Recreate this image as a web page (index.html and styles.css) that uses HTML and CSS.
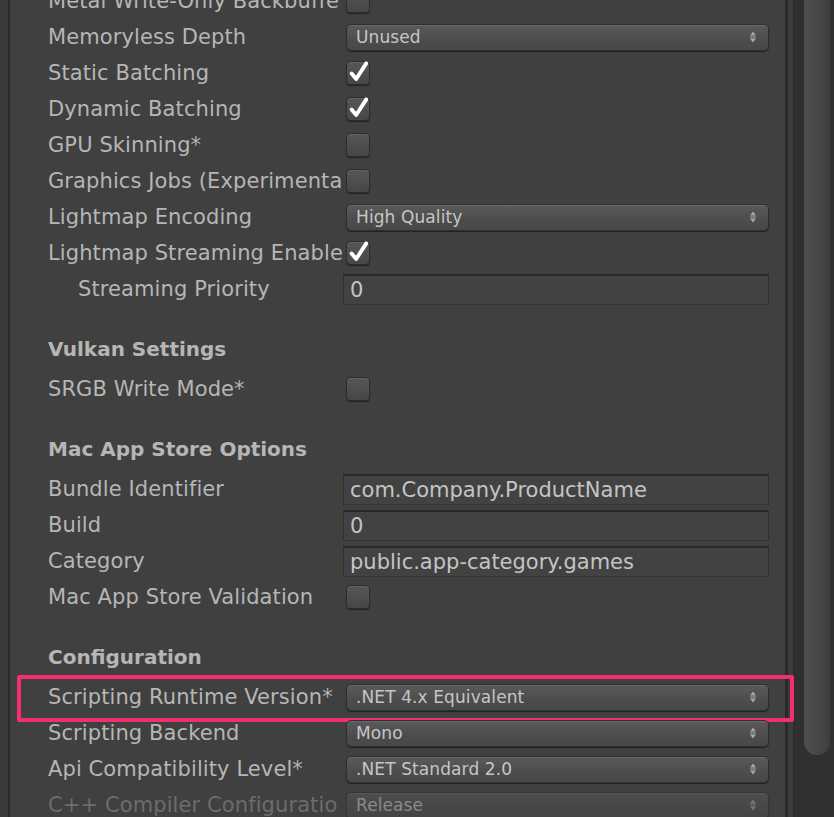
FILE: index.html
```html
<!DOCTYPE html>
<html>
<head>
<meta charset="utf-8">
<link rel="stylesheet" href="styles.css">
</head>
<body>
<div class="window">
  <div class="left-strip"></div>
  <div class="panel">
    <div class="content">
      <div class="row"><div class="label">Metal Write-Only Backbuffe</div><div class="value"><span class="check"></span></div></div>
      <div class="row"><div class="label">Memoryless Depth</div><div class="value"><div class="dropdown"><span>Unused</span><svg class="arrows" viewBox="0 0 8 14"><path d="M1 5.5 L4 1.5 L7 5.5Z M1 8.5 L4 12.5 L7 8.5Z"/><rect x="1" y="6.5" width="6" height="1"/></svg></div></div></div>
      <div class="row"><div class="label">Static Batching</div><div class="value"><span class="check on"><svg viewBox="0 0 24 24"><path d="M5 12.5 L10 18.5 L21 1.5"/></svg></span></div></div>
      <div class="row"><div class="label">Dynamic Batching</div><div class="value"><span class="check on"><svg viewBox="0 0 24 24"><path d="M5 12.5 L10 18.5 L21 1.5"/></svg></span></div></div>
      <div class="row"><div class="label">GPU Skinning*</div><div class="value"><span class="check"></span></div></div>
      <div class="row"><div class="label">Graphics Jobs (Experimenta</div><div class="value"><span class="check"></span></div></div>
      <div class="row"><div class="label">Lightmap Encoding</div><div class="value"><div class="dropdown"><span>High Quality</span><svg class="arrows" viewBox="0 0 8 14"><path d="M1 5.5 L4 1.5 L7 5.5Z M1 8.5 L4 12.5 L7 8.5Z"/><rect x="1" y="6.5" width="6" height="1"/></svg></div></div></div>
      <div class="row"><div class="label">Lightmap Streaming Enable</div><div class="value"><span class="check on"><svg viewBox="0 0 24 24"><path d="M5 12.5 L10 18.5 L21 1.5"/></svg></span></div></div>
      <div class="row"><div class="label indent">Streaming Priority</div><div class="value"><div class="field">0</div></div></div>

      <section class="section">
        <div class="header">Vulkan Settings</div>
        <div class="row"><div class="label">SRGB Write Mode*</div><div class="value"><span class="check"></span></div></div>
      </section>

      <section class="section">
        <div class="header">Mac App Store Options</div>
        <div class="row"><div class="label">Bundle Identifier</div><div class="value"><div class="field">com.Company.ProductName</div></div></div>
        <div class="row"><div class="label">Build</div><div class="value"><div class="field">0</div></div></div>
        <div class="row"><div class="label">Category</div><div class="value"><div class="field">public.app-category.games</div></div></div>
        <div class="row"><div class="label">Mac App Store Validation</div><div class="value"><span class="check"></span></div></div>
      </section>

      <section class="section">
        <div class="header">Configuration</div>
        <div class="row highlighted"><div class="label">Scripting Runtime Version*</div><div class="value"><div class="dropdown"><span>.NET 4.x Equivalent</span><svg class="arrows" viewBox="0 0 8 14"><path d="M1 5.5 L4 1.5 L7 5.5Z M1 8.5 L4 12.5 L7 8.5Z"/><rect x="1" y="6.5" width="6" height="1"/></svg></div></div><div class="annotation"></div></div>
        <div class="row"><div class="label">Scripting Backend</div><div class="value"><div class="dropdown"><span>Mono</span><svg class="arrows" viewBox="0 0 8 14"><path d="M1 5.5 L4 1.5 L7 5.5Z M1 8.5 L4 12.5 L7 8.5Z"/><rect x="1" y="6.5" width="6" height="1"/></svg></div></div></div>
        <div class="row"><div class="label">Api Compatibility Level*</div><div class="value"><div class="dropdown"><span>.NET Standard 2.0</span><svg class="arrows" viewBox="0 0 8 14"><path d="M1 5.5 L4 1.5 L7 5.5Z M1 8.5 L4 12.5 L7 8.5Z"/><rect x="1" y="6.5" width="6" height="1"/></svg></div></div></div>
        <div class="row disabled"><div class="label">C++ Compiler Configuratio</div><div class="value"><div class="dropdown"><span>Release</span><svg class="arrows" viewBox="0 0 8 14"><path d="M1 5.5 L4 1.5 L7 5.5Z M1 8.5 L4 12.5 L7 8.5Z"/><rect x="1" y="6.5" width="6" height="1"/></svg></div></div></div>
      </section>
    </div>
  </div>
  <div class="gutter">
    <div class="g-line"></div>
    <div class="g-mid"></div>
    <div class="g-line2"></div>
    <div class="scrollbar"><div class="thumb"></div></div>
  </div>
</div>
</body>
</html>
```

FILE: styles.css
```css
html, body {
  margin: 0;
  padding: 0;
  height: 817px;
  overflow: hidden;
  background: #404040;
  font-family: "DejaVu Sans", "Noto Sans", sans-serif;
}

.window {
  display: flex;
  height: 817px;
  width: 834px;
}

.left-strip {
  width: 8px;
  flex: none;
  background: #3a3a3a;
  border-right: 2px solid #2b2b2b;
}

.panel {
  width: 775px;
  flex: none;
  background: #404040;
  position: relative;
  z-index: 1;
}

.content {
  margin-top: -17px;
}

.row {
  display: flex;
  align-items: center;
  height: 36px;
  padding-left: 38px;
  position: relative;
}

.label {
  width: 295px;
  flex: none;
  overflow: hidden;
  white-space: nowrap;
  font-size: 21px;
  color: #b6b6b6;
  letter-spacing: 0.1px;
}

.label.indent {
  padding-left: 30px;
  width: 265px;
}

.value {
  margin-left: 2px;
  display: flex;
  align-items: center;
}

.section {
  margin-top: 24px;
}

.header {
  height: 36px;
  margin-bottom: 4px;
  padding-left: 38px;
  display: flex;
  align-items: center;
  font-size: 20px;
  font-weight: bold;
  color: #b6b6b6;
}

.check {
  width: 22px;
  height: 22px;
  margin-left: 1px;
  border: 1px solid #2d2d2d;
  border-radius: 4px;
  background: linear-gradient(#575757, #464646);
  box-shadow: 0 1px 1px rgba(0,0,0,0.45), inset 0 1px 0 rgba(255,255,255,0.08);
  position: relative;
}

.check svg {
  position: absolute;
  left: 0;
  top: 0;
  width: 22px;
  height: 22px;
  overflow: visible;
}

.check svg path {
  fill: none;
  stroke: #ffffff;
  stroke-width: 4.2;
  stroke-linecap: round;
  stroke-linejoin: round;
}

.dropdown {
  width: 401px;
  height: 25px;
  margin-left: 1px;
  border: 1px solid #2e2e2e;
  border-radius: 5px;
  background: linear-gradient(#5a5a5a, #4c4c4c 60%, #484848);
  box-shadow: 0 1px 1px rgba(0,0,0,0.5), inset 0 1px 0 rgba(255,255,255,0.1);
  display: flex;
  align-items: center;
  justify-content: space-between;
  padding: 0 11px 0 9px;
  box-sizing: content-box;
}

.dropdown span {
  font-size: 17px;
  color: #c6c6c6;
  white-space: nowrap;
  letter-spacing: 0.1px;
}

.arrows {
  width: 8px;
  height: 14px;
  fill: #a8a8a8;
}

.field {
  width: 418px;
  height: 28px;
  margin-left: -2px;
  padding-left: 6px;
  background: #424242;
  border-top: 2px solid #292929;
  border-left: 1px solid #303030;
  border-right: 1px solid #303030;
  border-bottom: 1px solid #353535;
  display: flex;
  align-items: center;
  font-size: 21px;
  color: #c4c4c4;
  white-space: nowrap;
}

.disabled .label {
  color: #6c6c6c;
}

.disabled .dropdown {
  opacity: 0.55;
}

.annotation {
  position: absolute;
  left: 7px;
  top: -4px;
  width: 769px;
  height: 39px;
  border: 4px solid #f2306f;
  border-radius: 2px;
  pointer-events: none;
}

.gutter {
  flex: 1;
  display: flex;
  background: #333333;
}

.g-line {
  width: 3px;
  background: #2a2a2a;
}

.g-mid {
  width: 5px;
  background: #3b3b3b;
}

.g-line2 {
  width: 2px;
  background: #2c2c2c;
}

.scrollbar {
  flex: 1;
  background: #303030;
  padding: 0 4px 0 9px;
  display: flex;
  flex-direction: column;
}

.thumb {
  height: 755px;
  border-radius: 0 0 13px 13px;
  background: linear-gradient(90deg, #4e4e4e, #474747 60%, #3e3e3e);
}
```
